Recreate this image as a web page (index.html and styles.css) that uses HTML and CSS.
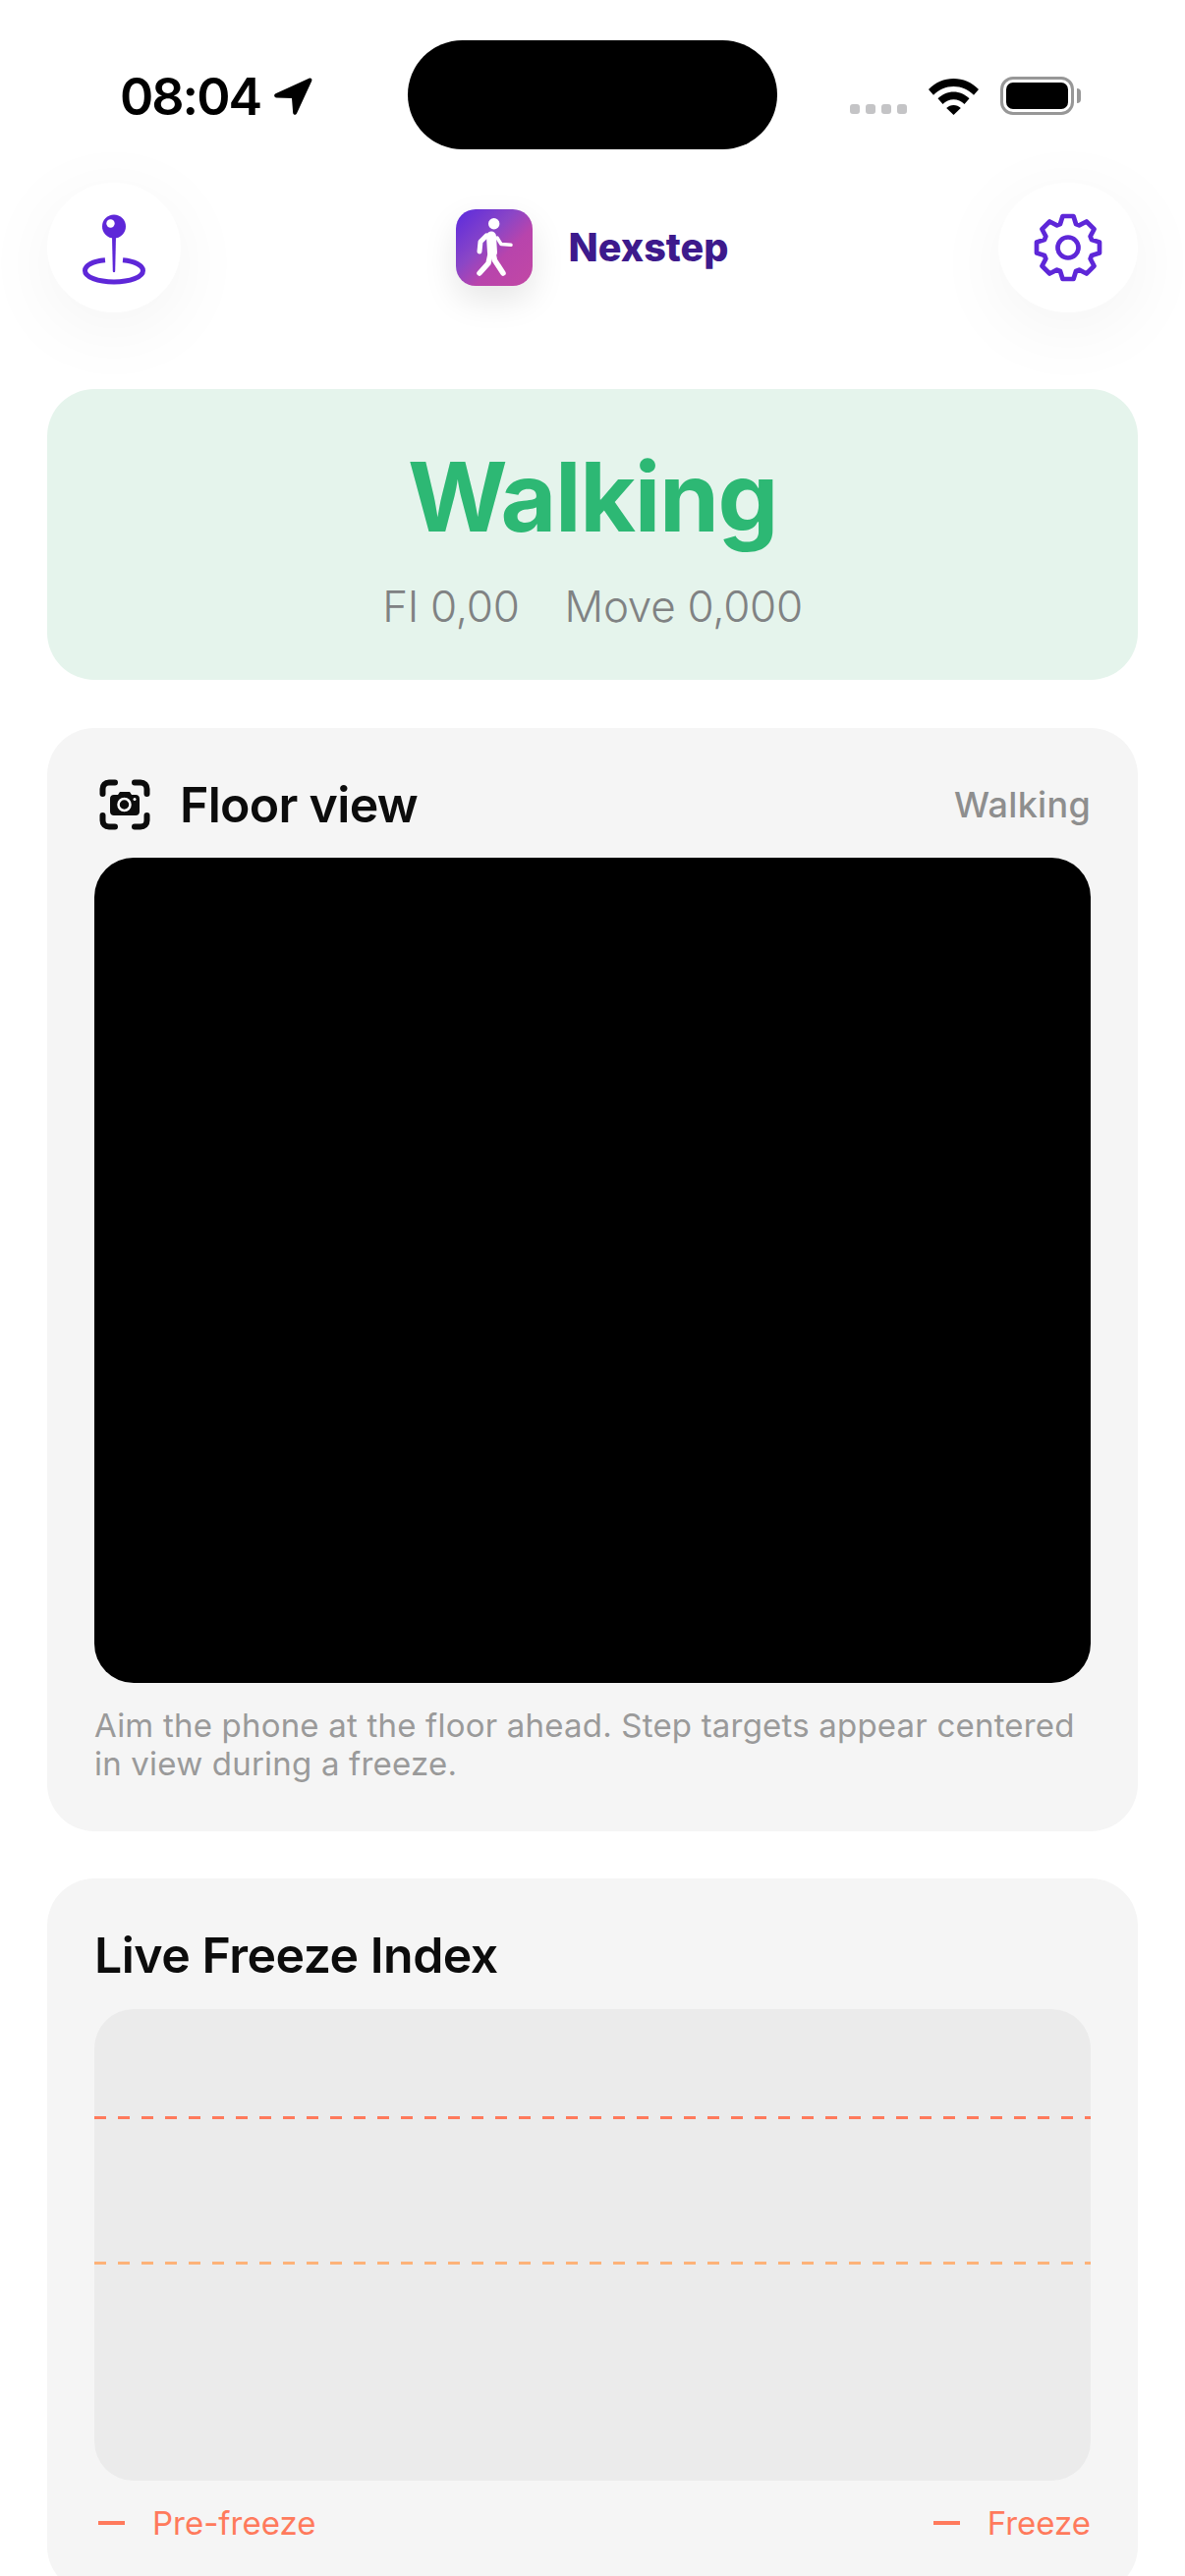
FILE: index.html
```html
<!DOCTYPE html>
<html lang="en">
  <head>
    <title>Nexstep</title>
    <meta charset="UTF-8">
    <meta name="viewport" content="width=device-width, initial-scale=1.0">
    <link rel="stylesheet" href="styles.css">
  </head>
  <body>
    <!-- Status bar -->
    <div class="status-bar">
      <div class="status-left">
        <span class="clock">08:04</span>
        <svg class="arrow-icon" viewBox="0 0 39 39"><path d="M35.500 .8c2-.8 3.500.7 2.700 2.700L23 36.500c-1 2-3.500 1.500-3.800-.5L18 21 2.500 20.500c-2.500-.2-3.300-3-1-4.300Z"/></svg>
      </div>
      <div class="island"></div>
      <div class="status-right">
        <div class="signal"><i></i><i></i><i></i><i></i></div>
        <svg class="wifi-icon" viewBox="0 0 51 37"><path d="M25.500 0C35 0 44 3.800 51 11l-5 5.800C40.400 11 33.200 8 25.500 8S10.600 11 5 16.800L0 11C7 3.800 16 0 25.500 0Z"/><path d="M25.500 13.500c6 0 11.600 2.400 16 6.800l-5 5.700c-3-3-6.900-4.700-11-4.700s-8 1.700-11 4.700l-5-5.700c4.400-4.400 10-6.800 16-6.800Z"/><path d="M25.500 27c2.800 0 5.300 1 7.300 2.900L25.500 37l-7.300-7.100c2-1.900 4.500-2.900 7.300-2.900Z"/></svg>
        <div class="battery"><div class="battery-fill"></div></div>
      </div>
    </div>

    <!-- Header -->
    <header class="app-header">
      <button class="round-btn" title="Location">
        <svg class="pin-icon" viewBox="0 0 64 72"><circle cx="32" cy="12.500" r="12" fill="#5e27d8"/><circle cx="28.500" cy="9.500" r="4.200" fill="#fff"/><path d="M30 22h4l-.800 36c-.1 1.600-2.300 1.600-2.400 0Z" fill="#5e27d8"/><path d="M23 46.800C10.500 48 2.500 52 2.500 57.500 2.500 64 15.500 69 32 69s29.500-5 29.500-11.500C61.500 52 53 48 41 46.800" fill="none" stroke="#5e27d8" stroke-width="5"/></svg>
      </button>
      <div class="brand">
        <div class="app-icon">
          <svg viewBox="0 0 78 78" fill="none" stroke="#fff" stroke-linecap="round" stroke-linejoin="round">
            <circle cx="38.700" cy="14.700" r="5.700" fill="#fff" stroke="none"/>
            <path d="M36 27.500 37 44" stroke-width="10"/>
            <path d="M31 27 25 33 24 43" stroke-width="5"/>
            <path d="M42 29 46 35.500 56 36.300" stroke-width="3.500"/>
            <path d="M38 45 39.500 52 48 65" stroke-width="5.500"/>
            <path d="M35 46 33 55 24 65" stroke-width="5.500"/>
          </svg>
        </div>
        <span class="brand-name">Nexstep</span>
      </div>
      <button class="round-btn round-btn-wide" title="Settings">
        <svg class="gear-icon" viewBox="0 0 78 78" fill="none" stroke="#5e27d8" stroke-width="4.700" stroke-linejoin="round"><g transform="translate(39 39)"><path d="M-8-24-5.500-32H5.500L8-24 11.310-22.630 18.740-26.520 26.520-18.740 22.630-11.310 24-8 32-5.500V5.500L24 8 22.630 11.310 26.520 18.740 18.740 26.520 11.310 22.630 8 24 5.500 32H-5.500L-8 24-11.310 22.630-18.740 26.520-26.520 18.740-22.630 11.310-24 8-32 5.500V-5.500L-24-8-22.630-11.310-26.520-18.740-18.740-26.520-11.310-22.630Z"/><circle r="10.500"/></g></svg>
      </button>
    </header>

    <main>
      <!-- Current state -->
      <section class="state-card">
        <h1 class="state-title">Walking</h1>
        <div class="state-values">
          <span>FI 0,00</span>
          <span>Move 0,000</span>
        </div>
      </section>

      <!-- Floor camera -->
      <section class="card">
        <div class="card-head">
          <div class="card-title-group">
            <svg class="camera-icon" viewBox="0 0 52 52"><path d="M3.500 15V10c0-4 2.500-6.500 6.500-6.500h6M36 3.500h6c4 0 6.500 2.500 6.500 6.500v5M48.500 37v5c0 4-2.500 6.500-6.500 6.500h-6M16 48.500h-6c-4 0-6.500-2.500-6.500-6.500v-5" fill="none" stroke="#0c0c0c" stroke-width="6" stroke-linecap="round"/><path d="M15 16h4l2-3h10l2 3h4c2.500 0 4 1.500 4 4v13c0 2.500-1.500 4-4 4H15c-2.500 0-4-1.500-4-4V20c0-2.500 1.500-4 4-4Z" fill="#0c0c0c"/><circle cx="25.500" cy="26" r="6" fill="none" stroke="#fff" stroke-width="2.500"/><circle cx="36" cy="20.500" r="1.500" fill="#fff"/></svg>
            <h2 class="card-title">Floor view</h2>
          </div>
          <span class="card-state">Walking</span>
        </div>
        <div class="camera-view"></div>
        <p class="card-note">Aim the phone at the floor ahead. Step targets appear centered in view during a freeze.</p>
      </section>

      <!-- Live chart -->
      <section class="card">
        <h2 class="card-title chart-title">Live Freeze Index</h2>
        <div class="chart">
          <div class="threshold threshold-freeze"></div>
          <div class="threshold threshold-pre"></div>
        </div>
        <div class="legend">
          <span class="legend-item">Pre-freeze</span>
          <span class="legend-item">Freeze</span>
        </div>
      </section>
    </main>
  </body>
</html>
```

FILE: styles.css
```css
* {
  box-sizing: border-box;
}
html, body {
  margin: 0;
  height: 2622px;
  overflow: hidden;
}
body {
  background-color: white;
  color: #0c0c0c;
  font-family: Inter, 'Liberation Sans', sans-serif;
}
h1, h2, p {
  margin: 0;
}

/* Status bar */
.status-bar {
  height: 186px;
  padding: 41px 113px 0 122px;
  display: flex;
  align-items: flex-start;
}
.status-left {
  display: flex;
  align-items: center;
  gap: 14px;
  margin-top: 38px;
  height: 39px;
  flex: 0 0 293px;
}
.clock {
  font-size: 52px;
  font-weight: 600;
  line-height: 39px;
  color: black;
  letter-spacing: -2px;
}
.arrow-icon {
  width: 39px;
  height: 39px;
  fill: black;
}
.island {
  width: 376px;
  height: 111px;
  border-radius: 56px;
  background-color: black;
}
.status-right {
  display: flex;
  align-items: flex-end;
  margin: 37px 0 0 auto;
  height: 39px;
}
.signal {
  display: flex;
  gap: 6px;
  margin: 0 22px 1px 0;
}
.signal i {
  width: 10px;
  height: 10px;
  border-radius: 3px;
  background-color: #c4c4c6;
}
.wifi-icon {
  width: 51px;
  height: 37px;
  fill: black;
  margin-right: 22px;
}
.battery {
  width: 75px;
  height: 39px;
  padding: 3px;
  border: 3px solid #979797;
  border-radius: 13px;
  position: relative;
}
.battery::after {
  content: "";
  position: absolute;
  left: 75px;
  top: 9px;
  width: 4px;
  height: 15px;
  border-radius: 0 4px 4px 0;
  background-color: #979797;
}
.battery-fill {
  height: 100%;
  border-radius: 7px;
  background-color: black;
}

/* Header */
.app-header {
  height: 132px;
  padding: 0 48px;
  display: flex;
  justify-content: space-between;
  align-items: center;
  position: relative;
  z-index: 1;
}
.round-btn {
  width: 136px;
  height: 132px;
  padding: 0;
  border: none;
  border-radius: 50%;
  background-color: white;
  box-shadow: 0 16px 80px rgba(0, 0, 0, 0.05);
  display: flex;
  justify-content: center;
  align-items: center;
}
.round-btn-wide {
  width: 142px;
}
.pin-icon {
  width: 64px;
  height: 72px;
  margin-top: 4px;
}
.gear-icon {
  width: 78px;
  height: 78px;
}
.brand {
  display: flex;
  align-items: center;
  gap: 37px;
  margin-left: 5px;
}
.app-icon {
  width: 78px;
  height: 78px;
  border-radius: 20px;
  background: linear-gradient(135deg, #5a2ade 0, #8b46c6 40%, #b844ac 62%, #c248a4 100%);
  box-shadow: 0 14px 34px rgba(0, 0, 0, 0.1);
}
.app-icon svg {
  display: block;
}
.brand-name {
  font-size: 39.5px;
  font-weight: 800;
  color: #3d1a8c;
}

/* Cards */
main {
  padding: 78px 48px 0;
  display: flex;
  flex-direction: column;
  gap: 48px;
}
.state-card {
  height: 296px;
  margin-bottom: 1px;
  padding-top: 49px;
  border-radius: 48px;
  background-color: #e5f4ec;
  text-align: center;
}
.state-title {
  font-size: 98px;
  font-weight: 700;
  line-height: 122px;
  letter-spacing: -1.4px;
  color: #2db874;
}
.state-values {
  margin-top: 23px;
  display: flex;
  justify-content: center;
  gap: 46px;
  font-size: 44px;
  font-weight: 300;
  line-height: 54px;
  letter-spacing: -0.3px;
  color: #808283;
}
.card {
  padding: 48px 48px 0;
  border-radius: 48px;
  background-color: #f5f5f5;
}
.card-head {
  height: 60px;
  margin-bottom: 24px;
  display: flex;
  justify-content: space-between;
  align-items: center;
}
.card-title-group {
  display: flex;
  align-items: center;
  gap: 30px;
  padding-left: 5px;
}
.camera-icon {
  width: 52px;
  height: 52px;
}
.card-title {
  font-size: 50px;
  font-weight: 600;
  line-height: 60px;
  letter-spacing: -0.7px;
}
.card-state {
  font-size: 36px;
  font-weight: 500;
  letter-spacing: 0.3px;
  color: #8e8e8e;
}
.camera-view {
  height: 840px;
  border-radius: 40px;
  background-color: black;
}
.card-note {
  margin-top: 24px;
  padding-bottom: 49px;
  font-size: 33px;
  line-height: 39px;
  letter-spacing: 0.2px;
  color: #9a9a9a;
}
.chart-title {
  height: 85px;
  letter-spacing: -0.5px;
}
.chart {
  height: 480px;
  border-radius: 40px;
  background-color: #ebebeb;
  display: flex;
  flex-direction: column;
}
.threshold {
  height: 3px;
}
.threshold-freeze {
  margin-top: 109px;
  background: repeating-linear-gradient(90deg, #ff7a5c 0, #ff7a5c 12px, transparent 12px, transparent 24px);
}
.threshold-pre {
  margin-top: 145px;
  background: repeating-linear-gradient(90deg, #fdb278 0, #fdb278 12px, transparent 12px, transparent 24px);
}
.legend {
  height: 115px;
  padding: 23px 0 0 4px;
  display: flex;
  justify-content: space-between;
  align-items: flex-start;
}
.legend-item {
  font-size: 33px;
  line-height: 40px;
  color: #ff7a5c;
  display: flex;
  align-items: center;
  gap: 28px;
}
.legend-item::before {
  content: "";
  width: 27px;
  height: 4px;
  background-color: #ff7a5c;
}
```
